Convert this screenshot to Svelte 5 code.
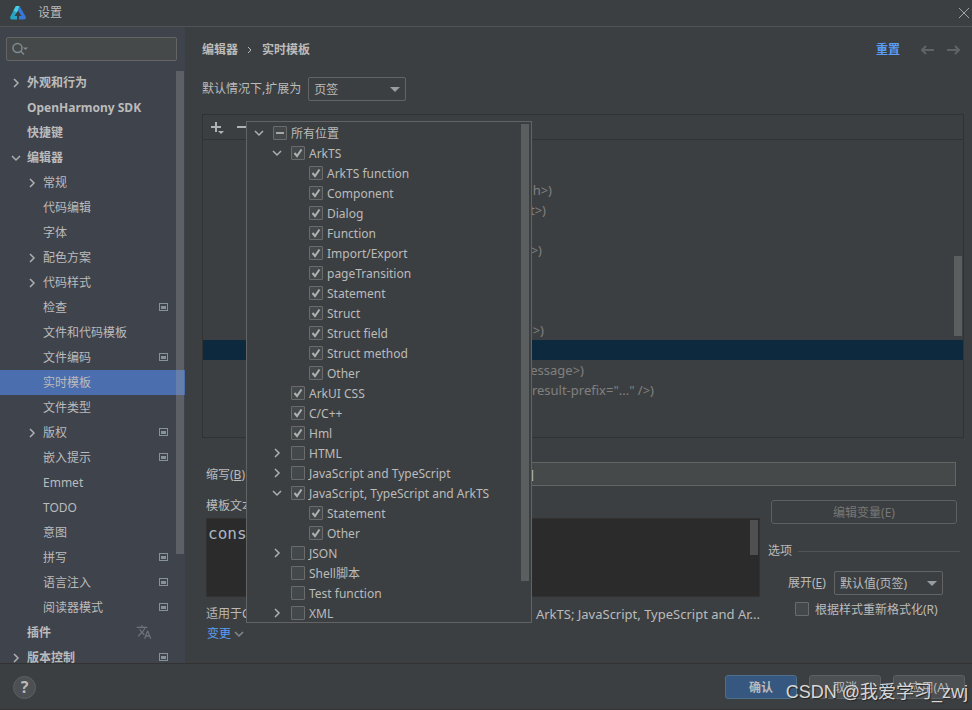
<script>
  const nav = [
    { t: '外观和行为', l: 0, a: 'right' },
    { t: 'OpenHarmony SDK', l: 0 },
    { t: '快捷键', l: 0 },
    { t: '编辑器', l: 0, a: 'down' },
    { t: '常规', l: 1, a: 'right' },
    { t: '代码编辑', l: 1 },
    { t: '字体', l: 1 },
    { t: '配色方案', l: 1, a: 'right' },
    { t: '代码样式', l: 1, a: 'right' },
    { t: '检查', l: 1, p: true },
    { t: '文件和代码模板', l: 1 },
    { t: '文件编码', l: 1, p: true },
    { t: '实时模板', l: 1, sel: true },
    { t: '文件类型', l: 1 },
    { t: '版权', l: 1, a: 'right', p: true },
    { t: '嵌入提示', l: 1, p: true },
    { t: 'Emmet', l: 1 },
    { t: 'TODO', l: 1 },
    { t: '意图', l: 1 },
    { t: '拼写', l: 1, p: true },
    { t: '语言注入', l: 1, p: true },
    { t: '阅读器模式', l: 1, p: true },
    { t: '插件', l: 0, lang: true },
    { t: '版本控制', l: 0, a: 'right', p: true }
  ];

  const contexts = [
    { t: '所有位置', l: 0, a: 'down', c: 'mixed' },
    { t: 'ArkTS', l: 1, a: 'down', c: 'on' },
    { t: 'ArkTS function', l: 2, c: 'on' },
    { t: 'Component', l: 2, c: 'on' },
    { t: 'Dialog', l: 2, c: 'on' },
    { t: 'Function', l: 2, c: 'on' },
    { t: 'Import/Export', l: 2, c: 'on' },
    { t: 'pageTransition', l: 2, c: 'on' },
    { t: 'Statement', l: 2, c: 'on' },
    { t: 'Struct', l: 2, c: 'on' },
    { t: 'Struct field', l: 2, c: 'on' },
    { t: 'Struct method', l: 2, c: 'on' },
    { t: 'Other', l: 2, c: 'on' },
    { t: 'ArkUI CSS', l: 1, c: 'on' },
    { t: 'C/C++', l: 1, c: 'on' },
    { t: 'Hml', l: 1, c: 'on' },
    { t: 'HTML', l: 1, a: 'right' },
    { t: 'JavaScript and TypeScript', l: 1, a: 'right' },
    { t: 'JavaScript, TypeScript and ArkTS', l: 1, a: 'down', c: 'on' },
    { t: 'Statement', l: 2, c: 'on' },
    { t: 'Other', l: 2, c: 'on' },
    { t: 'JSON', l: 1, a: 'right' },
    { t: 'Shell脚本', l: 1 },
    { t: 'Test function', l: 1 },
    { t: 'XML', l: 1, a: 'right' }
  ];

  // Each template description ends at its own width in the list.
  const templates = [
    {}, {},
    { t: 'h>)', w: 349 },
    { t: 't>)', w: 343 },
    {},
    { t: '>)', w: 339 },
    {}, {}, {},
    { t: '>)', w: 341 },
    { sel: true },
    { t: 'essage>)', w: 381 },
    { t: 'result-prefix="..." />)', w: 451 },
    {}
  ];

  const templateText = 'const';
</script>

{#snippet chevron(dir)}
  <svg class="chev" width="12" height="12" viewBox="0 0 12 12" aria-hidden="true">
    {#if dir === 'right'}
      <path d="M4 2 L8 6 L4 10" />
    {:else if dir === 'down'}
      <path d="M2 4 L6 8 L10 4" />
    {/if}
  </svg>
{/snippet}

{#snippet box(id, state)}
  <span class="box">
    <input type="checkbox" {id} checked={state === 'on'} indeterminate={state === 'mixed'} />
    <svg width="14" height="14" viewBox="0 0 14 14" aria-hidden="true">
      {#if state === 'on'}
        <path d="M3.5 7 L6 10 L10.5 3.5" fill="none" stroke="#b0b0b0" stroke-width="2" />
      {:else if state === 'mixed'}
        <path d="M3 7 H11" fill="none" stroke="#a7a7a7" stroke-width="2" />
      {/if}
    </svg>
  </span>
{/snippet}

<div class="dialog">
  <header class="titlebar">
    <svg width="16" height="14" viewBox="0 0 16 14" aria-hidden="true">
      <path d="M6 0 H9.5 L8 4.5 L4.5 10 H7 V13.5 H1.5 Q-.5 13 .4 10.5 Z" fill="#27a5c6" />
      <path d="M6 0 H9.5 L8 4.5 L6.5 6.5 L3.5 4.5 Z" fill="#45cde0" />
      <path d="M9.5 0 L15.6 10.5 Q16.500 13 14.500 13.500 H9 V10 H11.500 L8 4.500 Z" fill="#3578d8" />
    </svg>
    <h1>设置</h1>
    <button class="icon close" aria-label="关闭">
      <svg width="12" height="12" viewBox="0 0 12 12"><path d="M1 1 L11 11 M11 1 L1 11" stroke="#a2a4a5" fill="none" /></svg>
    </button>
  </header>

  <div class="body">
    <aside>
      <div class="search">
        <svg width="18" height="14" viewBox="0 0 18 14" aria-hidden="true">
          <circle cx="5.500" cy="6" r="4.500" fill="none" stroke="#7f8b91" stroke-width="1.500" />
          <path d="M8.500 9 L12 12.500" stroke="#7f8b91" stroke-width="1.500" />
          <path d="M11 5.500 H16 L13.500 8 Z" fill="#7f8b91" />
        </svg>
        <input type="text" aria-label="搜索" />
      </div>
      <nav>
        {#each nav as n}
          <a href="#settings" class:sub={n.l === 1} class:selected={n.sel}>
            {@render chevron(n.a)}
            <span class="name">{n.t}</span>
            {#if n.lang}
              <svg class="lang" width="16" height="16" viewBox="0 0 24 24" fill="#6c747c" aria-hidden="true">
                <path d="M12.870 15.070l-2.540-2.510.03-.03A17.520 17.520 0 0 0 14.070 6H17V4h-7V2H8v2H1v2h11.170A15.600 15.600 0 0 1 9 11.350 15.400 15.400 0 0 1 6.690 8h-2a17.500 17.500 0 0 0 2.980 4.560l-5.090 5.020L4 19l5-5 3.110 3.110zM18.500 10h-2L12 22h2l1.120-3h4.750L21 22h2zm-2.620 7l1.620-4.330L19.120 17z" />
              </svg>
            {/if}
            {#if n.p}
              <svg class="proj" width="9" height="8" viewBox="0 0 9 8" aria-hidden="true">
                <path d="M0 0 H9 V8 H0 Z M1 1 V7 H8 V1 Z" fill="#87939a" fill-rule="evenodd" />
                <rect x="2" y="3" width="5" height="3" fill="#87939a" />
              </svg>
            {/if}
          </a>
        {/each}
        <i class="thumb"></i>
      </nav>
    </aside>

    <main>
      <div class="crumbs">
        <b>编辑器</b>
        <svg width="4" height="8" viewBox="0 0 4 8" aria-hidden="true"><path d="M0 1 L3 4 L0 7" fill="none" stroke="#bbb" /></svg>
        <b>实时模板</b>
        <a class="reset" href="#reset">重置</a>
        <button class="icon" aria-label="后退">
          <svg width="14" height="10" viewBox="0 0 14 10"><path d="M14 5 H2 M6 1 L2 5 L6 9" /></svg>
        </button>
        <button class="icon" aria-label="前进">
          <svg width="14" height="10" viewBox="0 0 14 10"><path d="M0 5 H12 M8 1 L12 5 L8 9" /></svg>
        </button>
      </div>

      <div class="expand">
        <label for="by-default">默认情况下,扩展为</label>
        <span class="select">
          <select id="by-default"><option>页签</option></select>
          <svg width="10" height="5" viewBox="0 0 10 5" aria-hidden="true"><path d="M0 0 H10 L5 5 Z" fill="#9a9da0" /></svg>
        </span>
      </div>

      <section class="panel">
        <div class="tools">
          <button class="icon" aria-label="添加">
            <svg width="14" height="14" viewBox="0 0 14 14">
              <path d="M0 6 H10 M5 1 V11" stroke="#afb1b3" stroke-width="2" />
              <path d="M7 10 H13 L10 13 Z" fill="#afb1b3" />
            </svg>
          </button>
          <button class="icon" aria-label="移除">
            <svg width="10" height="14" viewBox="0 0 10 14"><path d="M0 6 H10" stroke="#afb1b3" stroke-width="2" /></svg>
          </button>
          <button class="icon" aria-label="复制">
            <svg width="10" height="14" viewBox="0 0 10 14"><path d="M0 0 H9" stroke="#afb1b3" stroke-width="2" /></svg>
          </button>
        </div>
        <ul>
          {#each templates as r}
            <li class:selected={r.sel}>{#if r.t}<span style="width: {r.w}px">{r.t}</span>{/if}</li>
          {/each}
        </ul>
        <i class="thumb"></i>
      </section>

      <div class="abbr">
        <label for="abbr">缩写(<u>B</u>)</label>
        <input id="abbr" type="text" value="]" />
      </div>

      <div class="lower">
        <div class="template">
          <label for="template-text">模板文本</label>
          <div class="editor">
            <textarea id="template-text" spellcheck="false" value={templateText}></textarea>
            <i class="thumb"></i>
          </div>
          <div class="scope"><span>适用于C</span><span class="list">d ArkTS; JavaScript, TypeScript and Ar...</span></div>
          <a class="change" href="#change">变更
            <svg width="10" height="10" viewBox="0 0 10 10" aria-hidden="true"><path d="M1 3 L5 7 L9 3" fill="none" stroke="#7f8b91" stroke-width="1.500" /></svg>
          </a>
        </div>
        <div class="options">
          <button class="btn wide" disabled>编辑变量(E)</button>
          <fieldset>
            <legend>选项</legend>
            <div class="opt">
              <label for="expand-with">展开(<u>E</u>)</label>
              <span class="select">
                <select id="expand-with"><option>默认值(页签)</option></select>
                <svg width="10" height="5" viewBox="0 0 10 5" aria-hidden="true"><path d="M0 0 H10 L5 5 Z" fill="#9a9da0" /></svg>
              </span>
            </div>
            <div class="reformat">
              {@render box('reformat', '')}
              <label for="reformat">根据样式重新格式化(R)</label>
            </div>
          </fieldset>
        </div>
      </div>

      <div class="popup">
        {#each contexts as c, i}
          <div class="ctx l{c.l}">
            {@render chevron(c.a)}
            {@render box('ctx' + i, c.c)}
            <label for={'ctx' + i}>{c.t}</label>
          </div>
        {/each}
        <i class="thumb"></i>
      </div>
    </main>
  </div>

  <footer>
    <button class="help" aria-label="帮助">?</button>
    <button class="btn primary">确认</button>
    <button class="btn">取消</button>
    <button class="btn">应用(A)</button>
    <span class="mark">CSDN @我爱学习_zwj</span>
  </footer>
</div>

<style>
  :global(body) { background: #3c3f41; }
  .dialog, .dialog :global(*) { box-sizing: border-box; }
  .dialog {
    display: flex;
    flex-direction: column;
    height: 100vh;
    background: #3c3f41;
    color: #bbb;
    font: 12px/20px "Noto Sans", "Noto Sans CJK SC", sans-serif;
    overflow: hidden;
  }
  input, select, textarea, button { font: inherit; color: inherit; margin: 0; }
  svg { display: block; flex: none; }
  a { color: inherit; text-decoration: none; }
  .icon { display: flex; padding: 0; border: 0; background: none; }
  .thumb { position: absolute; width: 8px; background: rgba(166, 166, 166, 0.3); }
  .chev path { fill: none; stroke: #adb0b2; stroke-width: 1.500; }

  .titlebar {
    flex: none;
    display: flex;
    align-items: center;
    gap: 12px;
    height: 27px;
    padding: 0 2px 0 10px;
    border-bottom: 1px solid #515355;
  }
  h1 { margin: 0; font: inherit; }
  .close { margin-left: auto; }

  .body { flex: 1; min-height: 0; display: flex; }
  aside {
    flex: none;
    width: 185px;
    display: flex;
    flex-direction: column;
    gap: 9px;
    padding-top: 10px;
    background: #3f434c;
    overflow: hidden;
  }
  .search {
    flex: none;
    display: flex;
    align-items: center;
    height: 24px;
    margin: 0 8px 0 6px;
    padding-left: 5px;
    border: 1px solid #646464;
    border-radius: 2px;
    background: #45494a;
  }
  .search input { flex: 1; min-width: 0; border: 0; background: none; outline: 0; }
  nav { position: relative; flex: 1; min-height: 0; overflow: hidden; }
  nav a {
    display: flex;
    align-items: center;
    gap: 5px;
    height: 25px;
    padding: 0 17px 0 10px;
    font-weight: bold;
  }
  nav a.sub { padding-left: 26px; font-weight: normal; }
  nav a.selected { background: #4b6eaf; }
  .name { flex: 1; }
  nav .lang { margin: 0 16px 2px 0; }
  nav .proj { margin-bottom: 2px; }
  nav .thumb { top: 1px; right: 1px; height: 483px; }

  main {
    position: relative;
    flex: 1;
    min-width: 0;
    display: flex;
    flex-direction: column;
    padding: 13px 8px 0 17px;
  }
  .crumbs { display: flex; align-items: center; gap: 10px; padding-right: 3px; }
  .crumbs .reset { margin: 0 10px 0 auto; font-weight: bold; }
  .reset, .change { color: #589df6; }
  .crumbs .icon path { fill: none; stroke: #606365; stroke-width: 2; }
  .crumbs .icon + .icon { margin-left: 3px; }
  .expand { display: flex; align-items: center; gap: 7px; margin-top: 17px; }
  .select { display: grid; width: 98px; align-items: center; }
  .select > * { grid-area: 1 / 1; }
  .select svg { justify-self: end; margin-right: 6px; pointer-events: none; }
  select {
    appearance: none;
    height: 24px;
    padding: 2px 5px 0;
    border: 1px solid #646464;
    border-radius: 2px;
    background: #3c3f41;
  }
  .panel { position: relative; margin-top: 13px; height: 324px; border: 1px solid #323232; overflow: hidden; }
  .tools { display: flex; align-items: center; gap: 12px; height: 25px; padding: 2px 0 0 8px; border-bottom: 1px solid #323232; }
  ul { list-style: none; margin: 0; padding: 0; color: #808080; font-size: 13px; }
  li { height: 20px; }
  li span { display: block; text-align: right; white-space: nowrap; }
  li.selected { background: #0d293e; }
  .panel .thumb { top: 141px; right: 1px; height: 80px; }

  .abbr { display: flex; align-items: center; gap: 6px; margin: 24px 8px 0 4px; }
  .abbr label { padding-top: 2px; }
  .abbr input {
    flex: 1;
    min-width: 0;
    height: 24px;
    padding: 0 0 0 278px;
    border: 1px solid #646464;
    background: #45494a;
  }
  .lower { display: flex; gap: 8px; padding: 10px 4px 0; }
  .template { flex: 1; min-width: 0; }
  .template > label { display: block; }
  .editor { position: relative; margin-top: 2px; }
  textarea {
    display: block;
    width: 100%;
    height: 79px;
    padding: 4px 1px;
    border: 1px solid #323232;
    background: #2b2b2b;
    color: #a9b7c6;
    font: 16px/22px "DejaVu Sans Mono", "Liberation Mono", monospace;
    resize: none;
    overflow: hidden;
    outline: 0;
  }
  .editor .thumb { top: 2px; right: 2px; height: 35px; }
  .scope { display: flex; justify-content: space-between; margin-top: 7px; white-space: nowrap; }
  .scope .list { font-size: 13px; }
  .change { display: inline-flex; align-items: center; gap: 3px; padding-left: 1px; }
  .options { width: 192px; padding-top: 4px; }
  .btn {
    width: 72px;
    height: 24px;
    padding: 2px 0 0;
    border: 1px solid #5e6060;
    border-radius: 3px;
    background: #4c5052;
  }
  .btn.wide { display: block; width: 186px; margin-left: 3px; background: none; color: #777; }
  fieldset { margin: 17px 0 0; padding: 0; border: 0; }
  legend { display: flex; align-items: center; gap: 6px; width: 100%; padding: 0; }
  legend::after { content: ""; flex: 1; height: 1px; background: #515355; }
  .opt { display: flex; align-items: center; gap: 8px; padding: 10px 0 0 20px; }
  .opt .select { width: 109px; }
  .reformat { display: flex; align-items: center; gap: 6px; padding: 5px 0 0 27px; }

  .box { display: grid; flex: none; margin-bottom: 2px; }
  .box > * { grid-area: 1 / 1; }
  .box input { appearance: none; width: 14px; height: 14px; border: 1px solid #6b6b6b; border-radius: 1px; background: #43494a; }
  .box svg { pointer-events: none; }

  .popup {
    position: absolute;
    left: 61px;
    top: 94px;
    width: 286px;
    height: 502px;
    padding: 2px 0 0 6px;
    border: 1px solid #616365;
    background: #3c3f41;
    overflow: hidden;
  }
  .ctx { display: flex; align-items: center; height: 20px; }
  .ctx .chev { margin-bottom: 2px; }
  .ctx .box { margin: 0 4px 2px 8px; }
  .ctx.l1 { padding-left: 18px; }
  .ctx.l2 { padding-left: 36px; }
  .popup .thumb { top: 2px; right: 2px; height: 457px; }

  footer {
    position: relative;
    flex: none;
    display: flex;
    align-items: center;
    gap: 12px;
    height: 47px;
    padding: 1px 7px 0 13px;
    border-top: 1px solid #323232;
    border-bottom: 1px solid #323232;
  }
  .help {
    width: 23px;
    height: 23px;
    margin-right: auto;
    padding: 0;
    border: 1px solid #5e6060;
    border-radius: 50%;
    background: #4c5052;
    font-size: 16px;
    font-weight: bold;
  }
  .btn.primary { background: #365880; border-color: #4c708c; font-weight: bold; }
  .mark {
    position: absolute;
    right: 4px;
    top: 16px;
    color: #d8d8d8;
    font-family: "Liberation Sans", "Noto Sans CJK SC", sans-serif;
    font-size: 18px;
    line-height: 24px;
    white-space: nowrap;
    text-shadow: 1px 1px 1px #222;
  }
</style>
